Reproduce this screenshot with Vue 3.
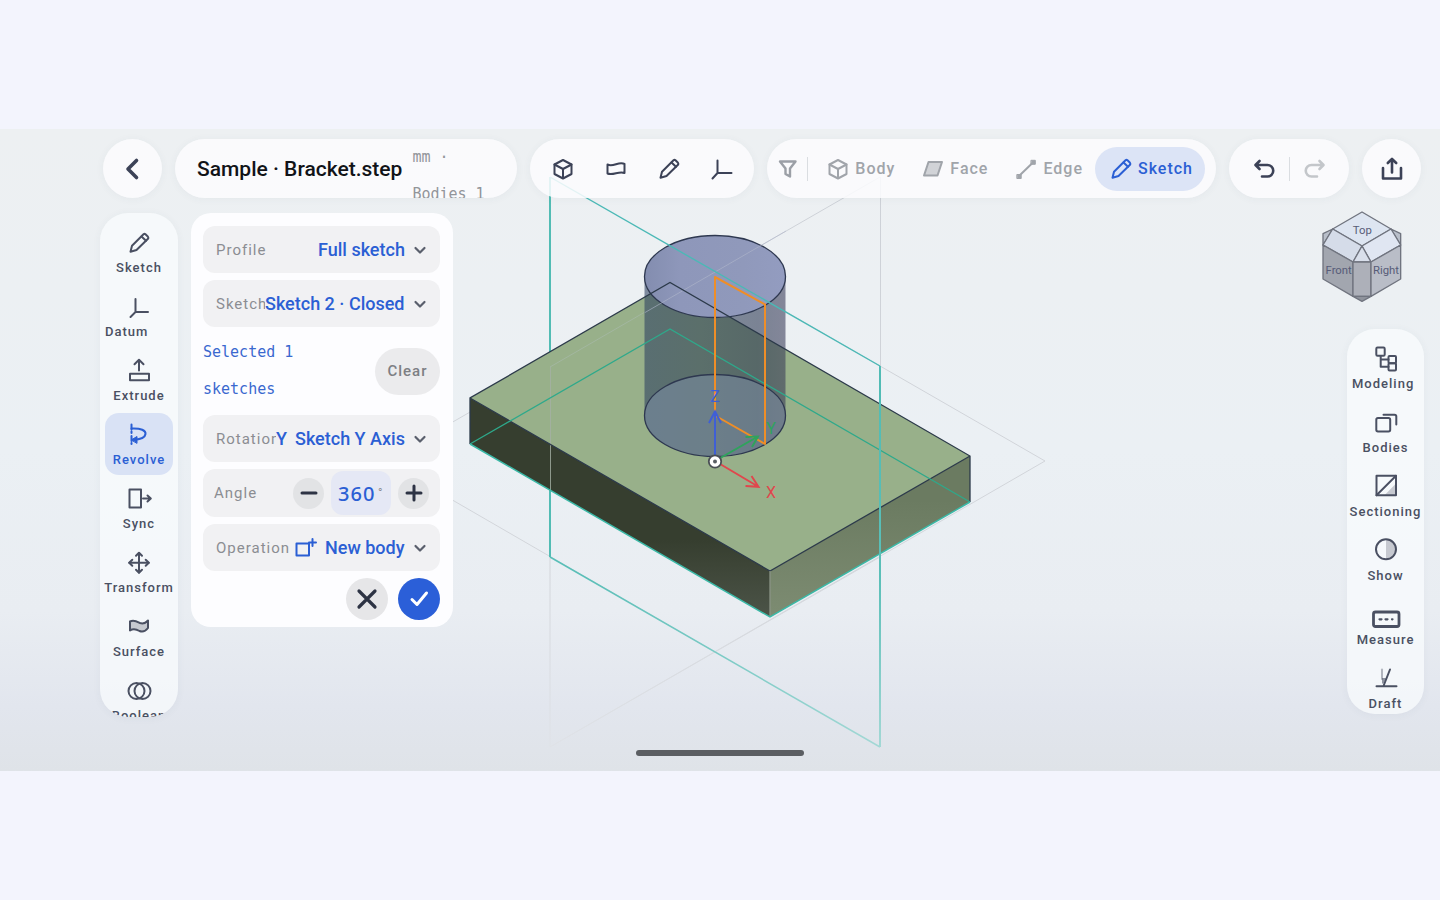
<script setup>
import { h, ref } from 'vue';

// every icon lives on a 30x30 grid; an entry is a path or [path, extra attrs]
const shade = { fill: 'currentColor', 'fill-opacity': 0.28, stroke: 'none' };
const icons = {
  back: [['M18.500 6.500L10 15L18.500 23.500', { 'stroke-width': 3.6 }]],
  cube: ['M15 6L23.500 10.500V20L15 24.500L6.500 20V10.500Z', 'M6.500 10.500L15 15L23.500 10.500M15 15V24'],
  flag: ['M6.500 10.500C12 13.500 18 7 23.500 10V19C18 16.500 12 22 6.500 19.500Z'],
  pencil: ['M6.500 23.800L8 17.800L19.500 6.300Q20.500 5.500 21.500 6.300L24 8.800Q24.800 9.800 24 10.800L12.500 22Z', 'M17.500 8.500L22 12.800'],
  axes: ['M10.500 6.500V19H24.500M10.500 19L5.500 24.500'],
  filter: [['M7 7.500H22.500L17 14.500V22.500L12.500 20V14.500Z', { 'stroke-width': 2.4 }]],
  face: [['M10.500 8H24L19.500 21.500H6Z', { fill: 'currentColor', 'fill-opacity': 0.45 }]],
  edge: ['M8 22L22 8.500', ['M6.200 20.500h4v4h-4ZM20.300 6.300h4v4h-4Z', { fill: 'currentColor', 'stroke-width': 1 }]],
  undo: [['M10.500 7L6.500 11L10.500 15M7 11H18.500A5.700 5.700 0 0 1 18.500 22.500H13', { 'stroke-width': 2.6 }]],
  redo: [['M19.500 7L23.500 11L19.500 15M23 11H11.500A5.700 5.700 0 0 0 11.500 22.500H17', { 'stroke-width': 2.6 }]],
  share: [['M6 14V24.500H24V14', { 'stroke-width': 2.6 }], ['M15 18.500V5M10.800 9L15 4.800L19.200 9', { 'stroke-width': 2.6 }]],
  datum: ['M11.500 7V20H24M11.500 20L6.500 25'],
  extrude: ['M15 14.500V4M10.500 8.300L15 3.800L19.500 8.300', 'M6 17.800H25V24.200H6Z'],
  revolve: [['M7.500 4.500V13M7.500 16V24', { 'stroke-dasharray': '5 2' }], 'M7.500 8.500C17 8 22 10.500 21.500 14C21 18 16 19.500 9 19.700', ['M7.500 19.800L13 16.500V23Z', { fill: 'currentColor', 'stroke-width': 1 }]],
  sync: ['M5.500 5.500H17V23.500H5.500Z', 'M19 14.500H26.500M23.500 11.500L26.800 14.500L23.500 17.500'],
  transform: ['M15 5V24.500M5.300 14.700H24.700', 'M12 7.800L15 4.700L18 7.800M12 21.700L15 24.800L18 21.700M8.300 11.700L5.200 14.700L8.300 17.700M21.700 11.700L24.800 14.700L21.700 17.700'],
  surface: [['M6 9.500C10 7.500 13 9.500 16 11C19 12 21.500 11.200 24 8.500V16C21.500 19.200 18.500 20.200 15.500 19C12 17 9 16.500 6 18.500Z', { fill: 'currentColor', 'fill-opacity': 0.28 }]],
  boolean: ['M4.500 15a8 8 0 1 0 16 0a8 8 0 1 0 -16 0Z', 'M10.500 15a8 8 0 1 0 16 0a8 8 0 1 0 -16 0Z'],
  modeling: ['M6.500 3.500H12.500Q13.700 3.500 13.700 4.700V10.500Q13.700 11.700 12.500 11.700H6.500Q5.300 11.700 5.300 10.500V4.700Q5.300 3.500 6.500 3.500Z', 'M18.500 12H24Q25 12 25 13V18.200Q25 19.200 24 19.200H18.500Q17.500 19.200 17.500 18.200V13Q17.500 12 18.500 12Z', 'M18.500 19.200H24Q25 19.200 25 20.200V25.400Q25 26.400 24 26.400H18.500Q17.500 26.400 17.500 25.400V20.200Q17.500 19.200 18.500 19.200Z', 'M9.700 12V22.800H17.500M9.700 15.600H17.500'],
  bodies: ['M7 10H17.500Q19.200 10 19.200 11.700V21.800Q19.200 23.500 17.500 23.500H7Q5.300 23.500 5.300 21.800V11.700Q5.300 10 7 10Z', 'M12.500 6.700H23.500Q25.300 6.700 25.300 8.500V16.500'],
  sectioning: ['M5.500 3.700H25V23.300H5.500Z', 'M5.500 23.300L25 3.700', ['M24.500 12V22.800H14Z', shade]],
  show: ['M5 13.300a10 10 0 1 0 20 0a10 10 0 1 0 -20 0Z', ['M15 3.500A9.800 9.800 0 0 1 15 23.100Z', shade]],
  measure: [['M4.500 12H26Q28 12 28 14V24.500Q28 26.500 26 26.500H4.500Q2.500 26.500 2.500 24.500V14Q2.500 12 4.500 12Z', { 'stroke-width': 2.8 }], ['M8.500 19.300H10.500M14.500 19.300H16.500M21 19.300H21.500', { 'stroke-width': 2.2 }]],
  draft: ['M5.500 22.300H25.500M12.500 22L19 5.500', ['M11 5.500V15', { 'stroke-opacity': 0.4 }], ['M11 14H15L12.500 19.500H11Z', { fill: 'currentColor', 'fill-opacity': 0.6, stroke: 'none' }]],
  newBody: ['M5.500 10.500H18V22.500H5.500Z', 'M21.500 6V13M18 9.500H25'],
  chevron: [['M10.500 13L15 17.500L19.500 13', { 'stroke-width': 2.2 }]],
  minus: [['M8 15H22', { 'stroke-width': 3 }]],
  plus: [['M8 15H22M15 8V22', { 'stroke-width': 3 }]],
  close: [['M7 7L23 23M23 7L7 23', { 'stroke-width': 3.2 }]],
  check: [['M8 15.500L13 20.500L22.500 9', { 'stroke-width': 3 }]],
};

const Icon = ({ name }) =>
  h(
    'svg',
    { class: 'icon', viewBox: '0 0 30 30', 'aria-hidden': 'true' },
    icons[name].map((p) => (Array.isArray(p) ? h('path', { d: p[0], ...p[1] }) : h('path', { d: p })))
  );
Icon.props = ['name'];

const createTools = [
  { icon: 'cube', label: 'Solid' },
  { icon: 'flag', label: 'Surface' },
  { icon: 'pencil', label: 'Sketch' },
  { icon: 'axes', label: 'Datum' },
];

const selectModes = [
  { icon: 'cube', label: 'Body' },
  { icon: 'face', label: 'Face' },
  { icon: 'edge', label: 'Edge' },
  { icon: 'pencil', label: 'Sketch' },
];

const leftTools = [
  { icon: 'pencil', label: 'Sketch' },
  { icon: 'datum', label: 'Datum', start: true },
  { icon: 'extrude', label: 'Extrude' },
  { icon: 'revolve', label: 'Revolve' },
  { icon: 'sync', label: 'Sync' },
  { icon: 'transform', label: 'Transform' },
  { icon: 'surface', label: 'Surface' },
  { icon: 'boolean', label: 'Boolean' },
];

const rightTools = [
  { icon: 'modeling', label: 'Modeling', start: true },
  { icon: 'bodies', label: 'Bodies' },
  { icon: 'sectioning', label: 'Sectioning' },
  { icon: 'show', label: 'Show' },
  { icon: 'measure', label: 'Measure' },
  { icon: 'draft', label: 'Draft' },
];

const mode = ref('Sketch');
const tool = ref('Revolve');
const angle = ref(360);
</script>

<template>
  <div class="page">
    <main class="stage">
      <svg class="scene" viewBox="0 129 1440 642" preserveAspectRatio="xMidYMid slice" aria-hidden="true">
        <defs>
          <linearGradient id="teal" gradientUnits="userSpaceOnUse" x1="0" y1="177" x2="0" y2="747">
            <stop offset="0" stop-color="#48b8b2" />
            <stop offset="0.7" stop-color="#5abfb8" />
            <stop offset="1" stop-color="#a3d8d5" />
          </linearGradient>
          <linearGradient id="grey" gradientUnits="userSpaceOnUse" x1="0" y1="177" x2="0" y2="747">
            <stop offset="0" stop-color="#cdd1d7" />
            <stop offset="0.7" stop-color="#d3d6db" />
            <stop offset="1" stop-color="#dfe2e7" />
          </linearGradient>
          <linearGradient id="left" gradientUnits="userSpaceOnUse" x1="0" y1="540" x2="0" y2="617">
            <stop offset="0" stop-color="#363e2f" />
            <stop offset="1" stop-color="#4c5448" />
          </linearGradient>
          <linearGradient id="right" gradientUnits="userSpaceOnUse" x1="0" y1="500" x2="0" y2="617">
            <stop offset="0" stop-color="#6b7b61" />
            <stop offset="1" stop-color="#7d8c72" />
          </linearGradient>
          <linearGradient id="side">
            <stop offset="0" stop-color="#2c3f60" stop-opacity="0.58" />
            <stop offset="0.4" stop-color="#273850" stop-opacity="0.54" />
            <stop offset="0.8" stop-color="#28344f" stop-opacity="0.58" />
            <stop offset="1" stop-color="#383a58" stop-opacity="0.58" />
          </linearGradient>
          <linearGradient id="cap">
            <stop offset="0" stop-color="#838daf" />
            <stop offset="0.25" stop-color="#8e97ba" />
            <stop offset="0.7" stop-color="#9099bb" />
            <stop offset="1" stop-color="#939cc0" />
          </linearGradient>
        </defs>

        <g fill="none" stroke="url(#grey)">
          <path d="M880 177L550 367V747L880 557" />
          <path d="M880.500 177V557" />
          <path d="M385 461L715 271L1045 461L550 747M385 461L715 652" />
        </g>
        <path d="M550 557V177" fill="none" stroke="#52bcb4" stroke-width="2" />
        <path d="M550 557L880 747" fill="none" stroke="url(#teal)" stroke-width="1.500" />

        <path d="M470 398L670 282.500L970 456L770 571Z" fill="#98b08a" />
        <path d="M470 398L770 571V617L470 444Z" fill="url(#left)" />
        <path d="M770 571L970 456V502L770 617Z" fill="url(#right)" />
        <path d="M550.500 367V490" stroke="#a5b0a4" stroke-opacity="0.8" />
        <path d="M550 367L645 312" stroke="#a3b7a0" />
        <path d="M644.500 276.500A70.500 41 0 0 0 785.500 276.500V415.500A70.500 41 0 0 1 644.500 415.500Z" fill="url(#side)" />
        <ellipse cx="715" cy="415.500" rx="70.500" ry="41" fill="#8595b5" fill-opacity="0.42" stroke="#2e3850" stroke-width="1.300" />
        <ellipse cx="715" cy="276.500" rx="70.500" ry="41" fill="url(#cap)" stroke="#2e3850" stroke-width="1.300" />
        <path d="M645 312.500L786 231" stroke="#b0b8cc" stroke-opacity="0.6" />

        <g fill="none" stroke="#2c3a4a" stroke-width="1.300">
          <path d="M470 444V398L670 282.500L970 456V502M970 456L770 571L470 398" />
          <path d="M770 571V617" stroke="#8a9486" />
        </g>
        <path d="M470 444L670 329L970 502" fill="none" stroke="#2ea98b" stroke-width="1.300" />
        <path d="M470 444L770 617L970 502" fill="none" stroke="#3bb9a7" stroke-width="1.500" />
        <path d="M550 177L880 366" stroke="#4bb9b6" stroke-width="1.400" />
        <path d="M879 366H881V747H879Z" fill="url(#teal)" />

        <path d="M715 277L765 304.500V444L715 415.500Z" fill="none" stroke="#ef8e27" stroke-width="2" stroke-linejoin="round" />
        <g fill="none" stroke-width="2">
          <path d="M715 461V412M709 423L715 411.500L721 423" stroke="#3f5fd6" />
          <path d="M715 461L758 436.500M745.500 437L758 436.500L752 447" stroke="#2fa35c" />
          <path d="M715 461L758 486.500M751.500 476L758.500 486.800L745.500 486" stroke="#e0474d" />
        </g>
        <g class="axis-label">
          <text x="715" y="402" fill="#3f5fd6">Z</text>
          <text x="771" y="434" fill="#2fa35c">Y</text>
          <text x="771" y="498" fill="#e0474d">X</text>
        </g>
        <circle cx="715" cy="461.500" r="6.200" fill="#fff" stroke="#4a4f55" stroke-width="1.800" />
        <circle cx="715" cy="461.500" r="2" fill="#5a5f64" />
      </svg>

      <header class="topbar">
        <button class="pill pill--round" aria-label="Back"><Icon name="back" /></button>
        <div class="pill title-pill">
          <h1 class="title">Sample · Bracket.step</h1>
          <span class="meta">mm · Bodies 1</span>
        </div>
        <div class="pill create-pill">
          <button v-for="t in createTools" :key="t.label" class="create-btn" :aria-label="t.label"><Icon :name="t.icon" /></button>
        </div>
        <div class="pill mode-pill">
          <button class="filter-btn" aria-label="Filter"><Icon name="filter" /></button>
          <span class="divider"></span>
          <button
            v-for="m in selectModes"
            :key="m.label"
            class="mode-btn"
            :class="{ 'mode-btn--active': mode === m.label }"
            @click="mode = m.label"
          >
            <Icon :name="m.icon" />{{ m.label }}
          </button>
        </div>
        <div class="pill history-pill">
          <button class="history-btn" aria-label="Undo"><Icon name="undo" /></button>
          <span class="divider"></span>
          <button class="history-btn" aria-label="Redo" disabled><Icon name="redo" /></button>
        </div>
        <button class="pill pill--round" aria-label="Share"><Icon name="share" /></button>
      </header>

      <div class="workspace">
        <nav class="rail" aria-label="Tools">
          <button
            v-for="t in leftTools"
            :key="t.label"
            class="rail-btn"
            :class="{ 'rail-btn--active': tool === t.label, 'rail-btn--start': t.start }"
            @click="tool = t.label"
          >
            <Icon :name="t.icon" /><span>{{ t.label }}</span>
          </button>
        </nav>

        <form class="panel" @submit.prevent>
          <div class="field">
            <label for="profile">Profile</label>
            <select id="profile"><option>Full sketch</option></select>
            <Icon name="chevron" />
          </div>
          <div class="field">
            <label for="sketch">Sketch</label>
            <select id="sketch"><option>Sketch 2 · Closed</option></select>
            <Icon name="chevron" />
          </div>
          <div class="selection">
            <span class="selection__text">Selected 1 sketches</span>
            <button type="button" class="clear-btn">Clear</button>
          </div>
          <div class="field">
            <label for="axis">Rotation</label>
            <b class="field__mark">Y</b>
            <select id="axis"><option>Sketch Y Axis</option></select>
            <Icon name="chevron" />
          </div>
          <div class="field field--angle">
            <label for="angle">Angle</label>
            <button type="button" class="step-btn" aria-label="Decrease" @click="angle--"><Icon name="minus" /></button>
            <span class="angle-box"><input id="angle" v-model.number="angle" type="text" /><span>°</span></span>
            <button type="button" class="step-btn" aria-label="Increase" @click="angle++"><Icon name="plus" /></button>
          </div>
          <div class="field">
            <label for="operation">Operation</label>
            <span class="field__glyph"><Icon name="newBody" /></span>
            <select id="operation"><option>New body</option></select>
            <Icon name="chevron" />
          </div>
          <div class="actions">
            <button type="button" class="action" aria-label="Cancel"><Icon name="close" /></button>
            <button type="submit" class="action action--ok" aria-label="Confirm"><Icon name="check" /></button>
          </div>
        </form>

        <div class="side">
          <svg class="view-cube" viewBox="64 39 246 273" role="img" aria-label="View cube">
            <g stroke="#70747f" stroke-width="4" stroke-linejoin="round">
              <path d="M70 101L99 87L70 135ZM303 101L274 87L303 135Z" fill="#b9bfca" />
              <path d="M187 36L274 87L187 138L99 87Z" fill="#dde5f1" />
              <path d="M99 87L187 138L160 186L70 135Z" fill="#d5dce9" />
              <path d="M274 87L303 135L214 186L187 138Z" fill="#e0e6f2" />
              <path d="M187 138L214 186H160Z" fill="#d9dfeb" />
              <path d="M70 135L160 186V289L70 237Z" fill="#a2a6af" />
              <path d="M160 186H214V289H160Z" fill="#adb0b9" />
              <path d="M214 186L303 135V237L214 289Z" fill="#b9bdc7" />
              <path d="M160 289H214L187 304Z" fill="#8f939c" />
            </g>
            <g class="view-cube__label">
              <text x="188" y="101">Top</text>
              <text x="117" y="223">Front</text>
              <text x="259" y="223">Right</text>
            </g>
          </svg>
          <nav class="rail rail--right" aria-label="Views">
            <button v-for="t in rightTools" :key="t.label" class="rail-btn" :class="{ 'rail-btn--start': t.start }">
              <Icon :name="t.icon" /><span>{{ t.label }}</span>
            </button>
          </nav>
        </div>
      </div>

      <footer class="home"><span class="home__bar"></span></footer>
    </main>
  </div>
</template>

<style>
body {
  margin: 0;
  background: #f3f4fd;
}
</style>

<style scoped>
.page {
  min-height: 100vh;
  display: flex;
  align-items: center;
  font-family: Roboto, "Liberation Sans", sans-serif;
  color: #3c4257;
}

button,
select,
input {
  margin: 0;
  padding: 0;
  border: 0;
  background: none;
  color: inherit;
  font: inherit;
  letter-spacing: inherit;
}

.icon {
  flex: none;
  display: block;
  width: 30px;
  height: 30px;
  fill: none;
  stroke: currentColor;
  stroke-width: 2;
  stroke-linecap: round;
  stroke-linejoin: round;
}

.stage {
  position: relative;
  display: flex;
  flex-direction: column;
  flex: 1;
  min-width: 0;
  min-height: 0;
  aspect-ratio: 1440 / 642;
  overflow: hidden;
  background: linear-gradient(#edf0f2, #ebf0f4 50%, #e9edf2 75%, #e2e6ee 90%, #dfe3e8);
}

.scene {
  position: absolute;
  inset: 0;
  width: 100%;
  height: 100%;
}

.axis-label {
  font-size: 16px;
  text-anchor: middle;
}

.topbar {
  position: relative;
  display: flex;
  gap: 13px;
  padding: 10px 19px 15px 103px;
}

.pill {
  display: flex;
  align-items: center;
  height: 59px;
  border-radius: 30px;
  background: rgba(251, 252, 254, 0.86);
  box-shadow: 0 1px 8px rgba(60, 70, 90, 0.05);
}

.pill--round {
  flex: none;
  justify-content: center;
  width: 59px;
}

.title-pill {
  flex: 1;
  min-width: 0;
  gap: 10px;
  padding-left: 22px;
  overflow: hidden;
}

.title {
  margin: 0;
  font-size: 21px;
  font-weight: 500;
  line-height: 24px;
  white-space: nowrap;
  color: #111318;
}

.meta {
  align-self: flex-start;
  width: 84px;
  font: 15px/37px "DejaVu Sans Mono", monospace;
  color: #92959a;
}

.create-pill {
  flex: none;
  padding: 0 6px;
}

.create-btn {
  display: flex;
  justify-content: center;
  width: 53px;
}

.mode-pill {
  flex: none;
  padding: 0 11px 0 6px;
  font-size: 16px;
  font-weight: 500;
  letter-spacing: 1px;
}

.filter-btn {
  color: #9b9fa6;
}

.divider {
  width: 1px;
  height: 24px;
  background: #dadde1;
}

.mode-pill .divider {
  margin: 0 4px;
}

.mode-btn {
  display: flex;
  align-items: center;
  gap: 2px;
  height: 44px;
  padding: 0 12px 0 11px;
  border-radius: 22px;
  color: #a0a4aa;
}

.mode-btn--active {
  background: #dce4f6;
  color: #2b5fd4;
}

.history-pill {
  flex: none;
  justify-content: center;
  gap: 10px;
  width: 120px;
}

.history-btn:disabled {
  color: #c3c6ca;
}

.workspace {
  position: relative;
  display: flex;
  flex: 1 1 0;
  align-items: flex-start;
  min-height: 0;
  padding: 0 16px 0 100px;
}

.rail {
  flex: none;
  display: flex;
  flex-direction: column;
  gap: 2px;
  box-sizing: border-box;
  width: 78px;
  height: 100%;
  padding: 8px 5px;
  border-radius: 28px;
  overflow: hidden;
  background: rgba(250, 252, 254, 0.72);
  box-shadow: 0 1px 8px rgba(60, 70, 90, 0.05);
}

.rail-btn {
  flex: none;
  display: flex;
  flex-direction: column;
  align-items: center;
  gap: 1px;
  height: 62px;
  padding-top: 7px;
  border-radius: 14px;
  font-size: 13px;
  font-weight: 500;
  line-height: 18px;
  letter-spacing: 1px;
  color: #4a5062;
}

.rail-btn--start span {
  align-self: flex-start;
}

.rail-btn--active {
  background: #d9e2f5;
  color: #2b5fd4;
}

.panel {
  flex: none;
  display: flex;
  flex-direction: column;
  gap: 7px;
  box-sizing: border-box;
  width: 262px;
  margin-left: 13px;
  padding: 13px 13px 7px 12px;
  border-radius: 20px;
  background: #fdfdff;
}

.field {
  display: flex;
  align-items: center;
  height: 47px;
  padding: 0 5px 0 13px;
  border-radius: 12px;
  background: #f1f1f3;
}

.field label {
  flex: 1;
  min-width: 0;
  overflow: hidden;
  white-space: nowrap;
  font-size: 15px;
  letter-spacing: 1px;
  color: #8b8d92;
}

.field select {
  appearance: none;
  flex: none;
  font-size: 18px;
  font-weight: 500;
  color: #2b5fd4;
}

.field > .icon {
  color: #5a5f6c;
}

.field__mark {
  margin-right: 8px;
  font-size: 18px;
  font-weight: 500;
  color: #2b5fd4;
}

.field__glyph {
  margin-right: 4px;
  color: #2b5fd4;
}

.field--angle {
  gap: 7px;
  height: 48px;
  padding: 0 11px;
}

.step-btn {
  flex: none;
  display: flex;
  align-items: center;
  justify-content: center;
  width: 31px;
  height: 31px;
  border-radius: 50%;
  background: #e2e3e5;
  color: #2d3344;
}

.angle-box {
  display: flex;
  align-items: center;
  box-sizing: border-box;
  width: 60px;
  height: 44px;
  padding-left: 7px;
  border-radius: 12px;
  background: #e5e8f5;
  font-size: 12px;
  color: #8b8d92;
}

.angle-box input {
  width: 40px;
  font: 500 20px "Noto Sans", sans-serif;
  letter-spacing: 1px;
  color: #2b5fd4;
}

.selection {
  display: flex;
  align-items: center;
  justify-content: space-between;
}

.selection__text {
  width: 110px;
  font: 15px/37px "DejaVu Sans Mono", monospace;
  color: #3a68cf;
}

.clear-btn {
  width: 65px;
  height: 47px;
  border-radius: 24px;
  background: #ebebed;
  font-size: 15px;
  font-weight: 500;
  letter-spacing: 1px;
  color: #7d7f84;
}

.actions {
  display: flex;
  justify-content: flex-end;
  gap: 10px;
}

.action {
  display: flex;
  align-items: center;
  justify-content: center;
  width: 42px;
  height: 42px;
  border-radius: 50%;
  background: #e6e6e8;
  color: #2d3344;
}

.action--ok {
  background: #2b5fd8;
  color: #fff;
}

.side {
  display: flex;
  flex-direction: column;
  align-items: flex-end;
  gap: 25px;
  height: 100%;
  margin-left: auto;
}

.view-cube {
  flex: none;
  width: 82px;
  height: 91px;
  margin-right: 21px;
  overflow: visible;
}

.view-cube__label {
  font-size: 34px;
  text-anchor: middle;
  fill: #575c78;
}

.rail--right {
  flex: 1;
  width: 77px;
  min-height: 0;
  margin-bottom: 3px;
}

.home {
  position: relative;
  display: flex;
  justify-content: center;
  height: 21px;
  padding-top: 33px;
}

.home__bar {
  width: 168px;
  height: 6px;
  border-radius: 3px;
  background: #5b5e62;
}
</style>
